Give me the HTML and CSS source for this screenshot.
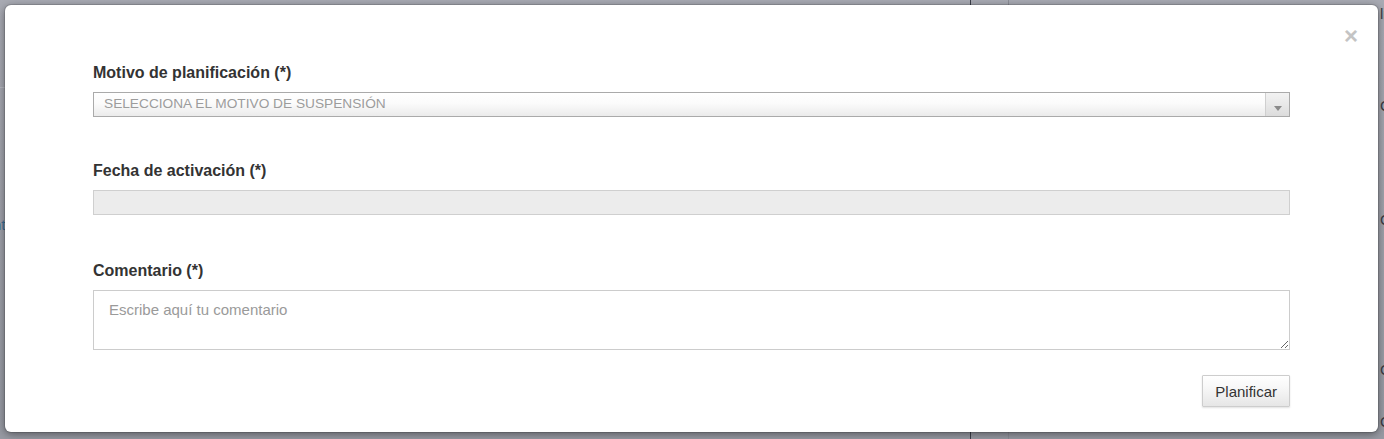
FILE: index.html
```html
<!DOCTYPE html>
<html lang="es">
<head>
<meta charset="utf-8">
<title>Planificar</title>
<link rel="stylesheet" href="styles.css">
</head>
<body>
<div class="backdrop">
  <span class="bg-line bg-line-dark"></span>
  <span class="bg-line bg-line-light"></span>
  <span class="bg-hline"></span>
  <span class="bg-text bg-text-left">nt</span>
  <span class="bg-text bg-text-r1">li</span>
  <span class="bg-text bg-text-r2">C</span>
  <span class="bg-text bg-text-r3">C</span>
  <span class="bg-text bg-text-r4">C</span>
  <span class="bg-text bg-text-r5">C</span>
</div>
<div class="modal">
  <button class="close" type="button" aria-label="Cerrar">&times;</button>
  <form class="form">
    <div class="group">
      <label class="label">Motivo de planificación (*)</label>
      <div class="select">
        <span class="select-text">SELECCIONA EL MOTIVO DE SUSPENSIÓN</span>
        <span class="select-arrow"><span class="triangle"></span></span>
      </div>
    </div>
    <div class="group group-date">
      <label class="label">Fecha de activación (*)</label>
      <input class="date-input" type="text" readonly>
    </div>
    <div class="group group-comment">
      <label class="label">Comentario (*)</label>
      <textarea class="comment" placeholder="Escribe aquí tu comentario"></textarea>
    </div>
    <div class="actions">
      <button class="btn" type="button">Planificar</button>
    </div>
  </form>
</div>
</body>
</html>
```

FILE: styles.css
```css
html, body {
  margin: 0;
  padding: 0;
}

body {
  width: 1384px;
  height: 439px;
  overflow: hidden;
  background: linear-gradient(to bottom, #a8aab3 0%, #9fa1aa 50%, #979aa3 100%);
  font-family: "Liberation Sans", Arial, sans-serif;
  position: relative;
}

.backdrop {
  position: absolute;
  inset: 0;
  z-index: 0;
}

.bg-line {
  position: absolute;
  top: 0;
  bottom: 0;
  width: 1px;
}

.bg-line-dark {
  left: 970px;
  background: #3c3f4a;
}

.bg-line-light {
  left: 1008px;
  background: #8c8e97;
}

.bg-hline {
  position: absolute;
  left: 0;
  width: 6px;
  top: 87px;
  height: 1px;
  background: #b6b8c0;
}

.bg-text {
  position: absolute;
  font-size: 15px;
  color: #3a3c44;
  line-height: 16px;
}

.bg-text-left {
  left: -7px;
  top: 217px;
  color: #3e6f96;
}

.bg-text-r1 { left: 1380px; top: 6px; }
.bg-text-r2 { left: 1380px; top: 98px; }
.bg-text-r3 { left: 1380px; top: 212px; }
.bg-text-r4 { left: 1380px; top: 362px; }
.bg-text-r5 { left: 1380px; top: 414px; }

.modal {
  position: relative;
  z-index: 1;
  box-sizing: border-box;
  margin: 5px 6px 0 5px;
  height: 427px;
  background: #fff;
  border-radius: 6px;
  box-shadow: 0 2px 8px rgba(0, 0, 0, 0.45), 0 0 0 1px rgba(0, 0, 0, 0.12);
  padding: 58px 88px 25px;
}

.close {
  position: absolute;
  top: 19px;
  right: 20px;
  border: 0;
  background: none;
  padding: 0;
  font-family: "Liberation Sans", Arial, sans-serif;
  font-size: 24px;
  font-weight: bold;
  line-height: 24px;
  color: #c4c4c4;
  cursor: pointer;
}

.form {
  display: flex;
  flex-direction: column;
}

.group {
  display: flex;
  flex-direction: column;
}

.group-date {
  margin-top: 44px;
}

.group-comment {
  margin-top: 46px;
}

.label {
  display: block;
  font-size: 16px;
  font-weight: bold;
  line-height: 20px;
  color: #333;
  margin-bottom: 9px;
}

.select {
  box-sizing: border-box;
  height: 25px;
  border: 1px solid #aaa;
  background: linear-gradient(to bottom, #ffffff 0%, #fbfbfb 45%, #ebebeb 100%);
  display: flex;
  align-items: stretch;
}

.select-text {
  flex: 1;
  padding-left: 10px;
  font-size: 13.7px;
  line-height: 22px;
  color: #9c9c9c;
  white-space: nowrap;
  overflow: hidden;
}

.select-arrow {
  width: 23px;
  border-left: 1px solid #cfcfcf;
  background: linear-gradient(to bottom, #f2f2f2 0%, #e8e8e8 50%, #dcdcdc 100%);
  display: flex;
  justify-content: center;
  align-items: flex-end;
  padding-bottom: 5px;
}

.triangle {
  width: 0;
  height: 0;
  border-left: 4px solid transparent;
  border-right: 4px solid transparent;
  border-top: 5px solid #8a8a8a;
}

.date-input {
  box-sizing: border-box;
  height: 25px;
  width: 100%;
  margin: 0;
  border: 1px solid #cfcfcf;
  background: #ececec;
  padding: 0 10px;
  font-family: inherit;
  font-size: 14px;
  outline: none;
}

.comment {
  box-sizing: border-box;
  display: block;
  width: 100%;
  height: 60px;
  margin: 0;
  border: 1px solid #cccccc;
  padding: 9px 15px;
  font-family: "Liberation Sans", Arial, sans-serif;
  font-size: 15px;
  line-height: 20px;
  color: #333;
  resize: both;
  outline: none;
}

.comment::placeholder {
  color: #9a9a9a;
}

.actions {
  display: flex;
  justify-content: flex-end;
  margin-top: 25px;
}

.btn {
  box-sizing: border-box;
  height: 32px;
  padding: 0 12px;
  border: 1px solid #cdcdcd;
  border-radius: 1px;
  background: linear-gradient(to bottom, #ffffff 0%, #f7f7f7 40%, #e6e6e6 100%);
  box-shadow: 0 1px 2px rgba(0, 0, 0, 0.12);
  font-family: "Liberation Sans", Arial, sans-serif;
  font-size: 15px;
  color: #333;
  cursor: pointer;
}
```
